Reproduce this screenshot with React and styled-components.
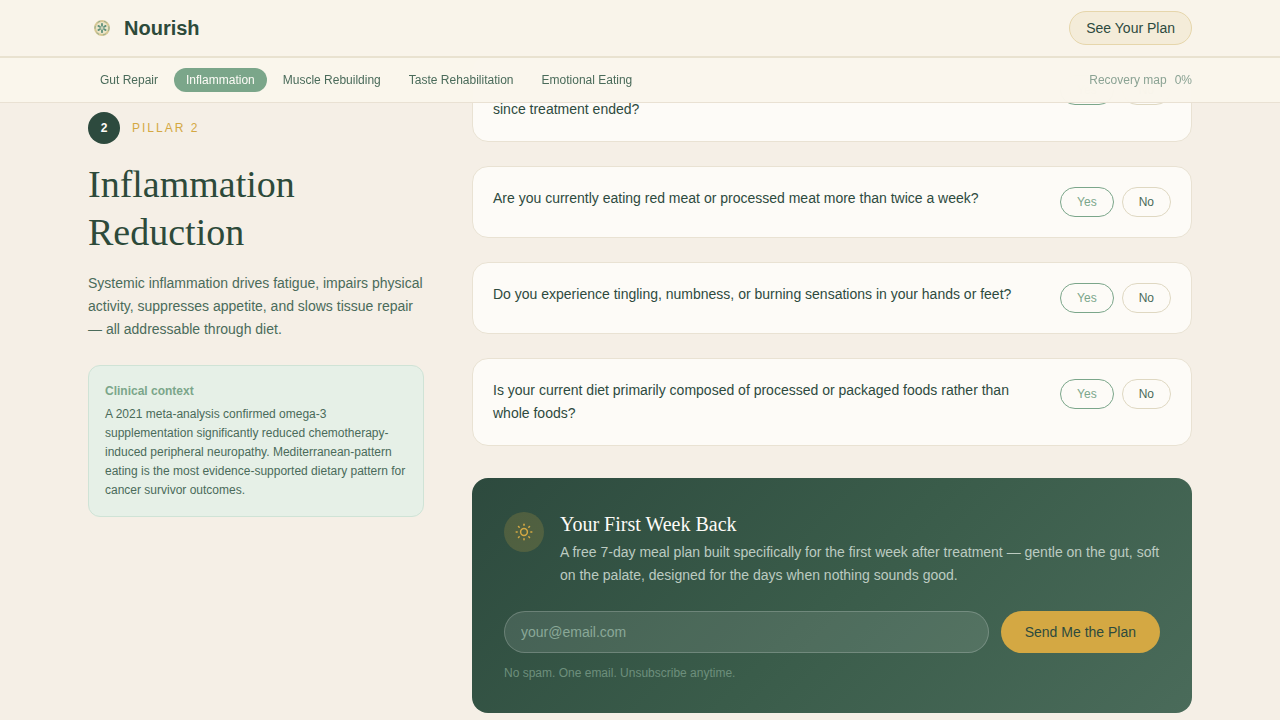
import React from "react";
import styled, { createGlobalStyle, css } from "styled-components";

const sans = '"Liberation Sans", Arial, sans-serif';
const serif = '"Liberation Serif", "Times New Roman", serif';

const GlobalStyle = createGlobalStyle`
  *, *::before, *::after { box-sizing: border-box; }
  body {
    margin: 0;
    background: #f5efe6;
    color: #2d4a3e;
    font-family: ${sans};
    font-size: 14px;
  }
  h1, h2, h3, p { margin: 0; font-weight: 400; }
  button, input { font: inherit; }
`;

const Container = styled.div`
  width: 100%;
  max-width: 1152px;
  margin: 0 auto;
  padding: 0 24px;
`;

const TopBars = styled.div`
  position: fixed;
  top: 0;
  left: 0;
  right: 0;
  z-index: 10;
`;

const Header = styled.header`
  background: #f9f4ea;
  border-bottom: 2px solid #e9e2d0;
`;

const HeaderRow = styled(Container)`
  display: flex;
  align-items: center;
  justify-content: space-between;
  height: 56px;
`;

const Brand = styled.a`
  display: flex;
  align-items: center;
  gap: 8px;
  color: #2d4a3a;
  font-size: 20px;
  font-weight: 700;
  text-decoration: none;
`;

const PlanButton = styled.button`
  height: 34px;
  padding: 0 16px;
  border: 1px solid #e6d6ab;
  border-radius: 17px;
  background: #f4ecd9;
  color: #2d4a3e;
`;

const SubNav = styled.nav`
  background: rgba(250, 245, 236, 0.95);
  backdrop-filter: blur(12px);
  border-bottom: 1px solid #e9e1d3;
`;

const SubNavRow = styled(Container)`
  display: flex;
  align-items: center;
  justify-content: space-between;
  height: 44px;
  font-size: 12px;
`;

const NavLinks = styled.div`
  display: flex;
  gap: 4px;
`;

const NavLink = styled.a`
  padding: 0 12px;
  border-radius: 12px;
  line-height: 24px;
  text-decoration: none;
  color: ${(p) => (p.$active ? "#fdfbf7" : "#4a6b5a")};
  background: ${(p) => (p.$active ? "#7ba68a" : "transparent")};
`;

const Progress = styled.div`
  display: flex;
  gap: 8px;
  color: #8ba394;
`;

const Main = styled(Container).attrs({ as: "main" })`
  display: grid;
  grid-template-columns: 7fr 15fr;
  gap: 48px;
  padding-top: 54px;
`;

const Aside = styled.aside`
  position: sticky;
  top: 112px;
  align-self: start;
`;

const PillarRow = styled.div`
  display: flex;
  align-items: center;
  gap: 12px;
  margin-bottom: 16px;
`;

const PillarNumber = styled.span`
  width: 32px;
  border-radius: 50%;
  background: #2d4a3e;
  color: #fdfbf7;
  font-size: 12px;
  font-weight: 700;
  line-height: 32px;
  text-align: center;
`;

const PillarLabel = styled.span`
  color: #d4a843;
  font-size: 12px;
  letter-spacing: 2px;
`;

const Title = styled.h1`
  color: #2d4a3a;
  font-family: ${serif};
  font-size: 38px;
  line-height: 48px;
`;

const Intro = styled.p`
  margin-top: 16px;
  color: #4a6b5a;
  line-height: 23px;
`;

const Context = styled.section`
  margin-top: 24px;
  padding: 16px;
  border: 1px solid #cfe3d6;
  border-radius: 12px;
  background: #e6f0e7;
  font-size: 12px;
  line-height: 19px;
`;

const ContextTitle = styled.h2`
  margin-bottom: 4px;
  color: #7ba68a;
  font-size: 12px;
  font-weight: 700;
`;

const ContextText = styled.p`
  color: #4a6b5a;
`;

const Questions = styled.div`
  display: flex;
  flex-direction: column;
  gap: 24px;
`;

const QuestionCard = styled.section`
  display: flex;
  align-items: flex-start;
  justify-content: space-between;
  gap: 32px;
  min-height: ${(p) => (p.$tall ? "88px" : "72px")};
  padding: 20px;
  border: 1px solid #e9e2d3;
  border-radius: 16px;
  background: #fdfbf7;
`;

const QuestionText = styled.p`
  align-self: ${(p) => (p.$low ? "flex-end" : "flex-start")};
  line-height: 23px;
`;

const Answers = styled.div`
  display: flex;
  flex-shrink: 0;
  gap: 8px;
`;

const AnswerButton = styled.button`
  height: 30px;
  padding: 0 16px;
  border: 1px solid #dfd8c2;
  border-radius: 15px;
  background: transparent;
  color: #4a6b5a;
  font-size: 12px;
  ${(p) =>
    p.$accent &&
    css`
      border-color: #7ba68a;
      color: #7ba68a;
    `}
`;

const SignUp = styled.section`
  margin-top: 8px;
  padding: 32px;
  border-radius: 16px;
  background: linear-gradient(135deg, #2d4a3e 0%, #3a5c4a 50%, #4a6b5a 100%);
`;

const SignUpIntro = styled.div`
  display: flex;
  align-items: flex-start;
  gap: 16px;
  margin-bottom: 24px;
`;

const SunBadge = styled.span`
  display: flex;
  align-items: center;
  justify-content: center;
  flex-shrink: 0;
  width: 40px;
  height: 40px;
  margin-top: 2px;
  border-radius: 50%;
  background: rgba(212, 168, 67, 0.2);
`;

const SignUpTitle = styled.h2`
  margin-bottom: 3px;
  color: #fdfbf7;
  font-family: ${serif};
  font-size: 20px;
  line-height: 28px;
`;

const SignUpText = styled.p`
  color: #bccbc1;
  line-height: 23px;
`;

const SignUpForm = styled.form`
  display: flex;
  gap: 12px;
`;

const EmailInput = styled.input`
  flex: 1;
  min-width: 0;
  height: 42px;
  padding: 0 16px;
  border: 1px solid rgba(255, 255, 255, 0.2);
  border-radius: 21px;
  background: rgba(255, 255, 255, 0.1);
  color: #fdfbf7;
  &::placeholder { color: #8aa898; opacity: 1; }
`;

const SendButton = styled.button`
  height: 42px;
  padding: 0 24px;
  border: 0;
  border-radius: 21px;
  background: #d4a843;
  color: #2d4a3e;
`;

const FinePrint = styled.p`
  margin-top: 12px;
  color: #6d8f7c;
  font-size: 12px;
  line-height: 16px;
`;

const petals = [0, 60, 120, 180, 240, 300];

function LogoMark() {
  return (
    <svg width="28" height="28" viewBox="0 0 28 28" aria-hidden="true">
      <circle cx="14" cy="14" r="7" fill="#ece6cb" stroke="#d8c895" strokeWidth="2" />
      <circle cx="14" cy="14" r="7" fill="none" stroke="#8fae90" strokeWidth="1" strokeDasharray="3 4" />
      <g stroke="#5f9079" strokeWidth="1.8" strokeLinecap="round">
        {petals.map((a) => (
          <path key={a} d="M14 11.4V9.8" transform={`rotate(${a} 14 14)`} />
        ))}
      </g>
      <g stroke="#5f9079" strokeWidth="0.8">
        {petals.map((a) => (
          <path key={a} d="M14 14V11.4" transform={`rotate(${a} 14 14)`} />
        ))}
      </g>
      <circle cx="14" cy="14" r="1" fill="#ece6cb" />
    </svg>
  );
}

const rays = [0, 45, 90, 135, 180, 225, 270, 315];

function SunIcon() {
  return (
    <svg width="20" height="20" viewBox="0 0 20 20" fill="none" stroke="#d4a843" strokeWidth="1.5" strokeLinecap="round" aria-hidden="true">
      <circle cx="10" cy="10" r="3.4" />
      {rays.map((a) => (
        <path key={a} d="M10 3.2V2.2" transform={`rotate(${a} 10 10)`} />
      ))}
    </svg>
  );
}

const pillars = ["Gut Repair", "Inflammation", "Muscle Rebuilding", "Taste Rehabilitation", "Emotional Eating"];

const questions = [
  { text: "since treatment ended?", low: true },
  { text: "Are you currently eating red meat or processed meat more than twice a week?" },
  { text: "Do you experience tingling, numbness, or burning sensations in your hands or feet?" },
  { text: "Is your current diet primarily composed of processed or packaged foods rather than whole foods?" },
];

function Question({ text, low }) {
  return (
    <QuestionCard $tall={low}>
      <QuestionText $low={low}>{text}</QuestionText>
      <Answers>
        <AnswerButton type="button" $accent>Yes</AnswerButton>
        <AnswerButton type="button">No</AnswerButton>
      </Answers>
    </QuestionCard>
  );
}

export default function App() {
  return (
    <>
      <GlobalStyle />
      <TopBars>
        <Header>
          <HeaderRow>
            <Brand href="#"><LogoMark />Nourish</Brand>
            <PlanButton type="button">See Your Plan</PlanButton>
          </HeaderRow>
        </Header>
        <SubNav>
          <SubNavRow>
            <NavLinks>
              {pillars.map((name) => (
                <NavLink key={name} href="#" $active={name === "Inflammation"}>{name}</NavLink>
              ))}
            </NavLinks>
            <Progress><span>Recovery map</span><span>0%</span></Progress>
          </SubNavRow>
        </SubNav>
      </TopBars>
      <Main>
        <Aside>
          <PillarRow>
            <PillarNumber>2</PillarNumber>
            <PillarLabel>PILLAR 2</PillarLabel>
          </PillarRow>
          <Title>Inflammation Reduction</Title>
          <Intro>
            Systemic inflammation drives fatigue, impairs physical activity, suppresses appetite, and slows tissue
            repair — all addressable through diet.
          </Intro>
          <Context>
            <ContextTitle>Clinical context</ContextTitle>
            <ContextText>
              A 2021 meta-analysis confirmed omega-3 supplementation significantly reduced chemotherapy-induced
              peripheral neuropathy. Mediterranean-pattern eating is the most evidence-supported dietary pattern for
              cancer survivor outcomes.
            </ContextText>
          </Context>
        </Aside>
        <Questions>
          {questions.map((q) => (
            <Question key={q.text} {...q} />
          ))}
          <SignUp>
            <SignUpIntro>
              <SunBadge><SunIcon /></SunBadge>
              <div>
                <SignUpTitle>Your First Week Back</SignUpTitle>
                <SignUpText>
                  A free 7-day meal plan built specifically for the first week after treatment — gentle on the gut,
                  soft on the palate, designed for the days when nothing sounds good.
                </SignUpText>
              </div>
            </SignUpIntro>
            <SignUpForm>
              <EmailInput type="email" placeholder="your@email.com" aria-label="Email address" />
              <SendButton type="button">Send Me the Plan</SendButton>
            </SignUpForm>
            <FinePrint>No spam. One email. Unsubscribe anytime.</FinePrint>
          </SignUp>
        </Questions>
      </Main>
    </>
  );
}
